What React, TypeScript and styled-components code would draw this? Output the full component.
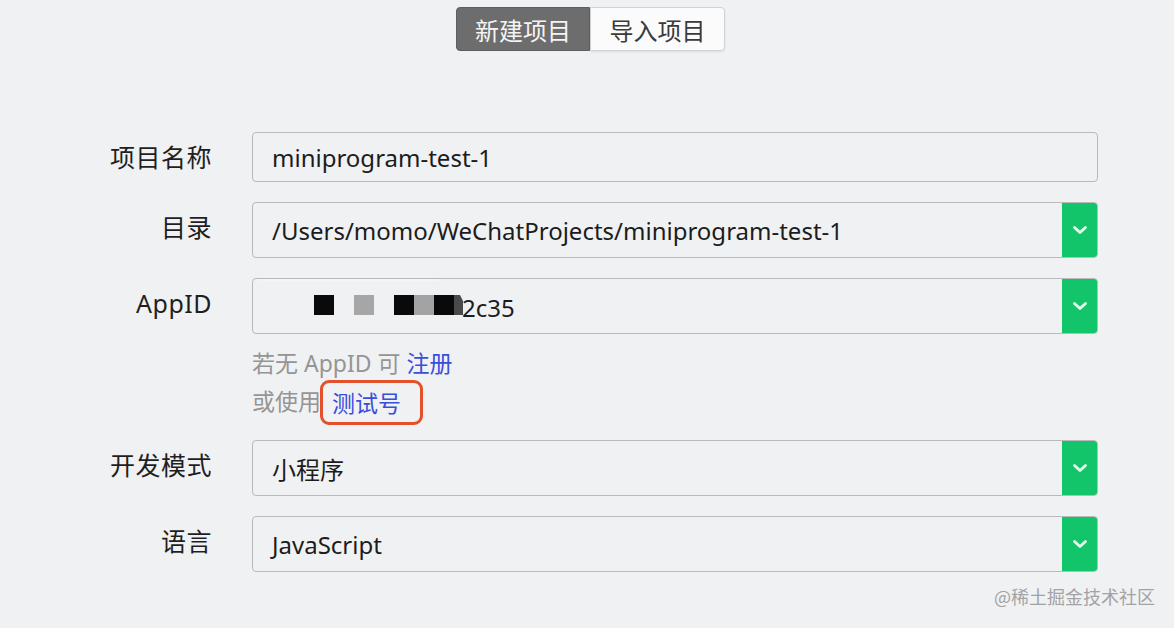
import React from "react";
import styled, { createGlobalStyle } from "styled-components";

const Global = createGlobalStyle`
  html, body { margin: 0; padding: 0; background: #f0f1f3; }
  body { font-family: "Noto Sans", "Noto Sans CJK SC", sans-serif; }
  #root { width: 1174px; height: 628px; overflow: hidden; }
`;

const Page = styled.div`
  position: relative;
  width: 1174px;
  height: 628px;
  display: flex;
  flex-direction: column;
  font-family: "Noto Sans", "Noto Sans CJK SC", sans-serif;
`;

const TabBar = styled.div`
  display: flex;
  padding: 7px 0 0 456px;
`;

const Tab = styled.div<{ $active?: boolean }>`
  width: ${(p) => (p.$active ? 134 : 135)}px;
  height: 44px;
  box-sizing: border-box;
  display: flex;
  align-items: center;
  justify-content: center;
  font-size: 24px;
  font-family: "Noto Sans CJK SC", sans-serif;
  color: ${(p) => (p.$active ? "#f4f4f4" : "#3a3a3a")};
  background: ${(p) => (p.$active ? "#6d6d6d" : "#fbfbfb")};
  border: 1px solid ${(p) => (p.$active ? "#5e5e5e" : "#d2d2d2")};
  border-radius: ${(p) => (p.$active ? "4px 0 0 4px" : "0 4px 4px 0")};
  box-shadow: ${(p) => (p.$active ? "none" : "0 1px 2px rgba(0,0,0,0.08)")};
`;

const Form = styled.div`
  display: flex;
  flex-direction: column;
  margin-top: 81px;
`;

const Row = styled.div<{ $gap?: number }>`
  display: grid;
  grid-template-columns: 212px 846px;
  column-gap: 40px;
  margin-top: ${(p) => p.$gap ?? 0}px;
`;

const Label = styled.div`
  text-align: right;
  height: 50px;
  line-height: 50px;
  font-size: 25px;
  letter-spacing: 0.5px;
  color: #1f1f1f;
  font-family: "Noto Sans", "Noto Sans CJK SC", sans-serif;
`;

const Field = styled.div<{ $h: number }>`
  position: relative;
  height: ${(p) => p.$h}px;
  box-sizing: border-box;
  border: 1px solid #b9b9b9;
  border-radius: 4px;
  display: flex;
  align-items: center;
  padding-left: 19px;
  font-size: 24px;
  color: #1c1c1c;
  font-family: "Noto Sans", "Noto Sans CJK SC", sans-serif;
  overflow: hidden;
`;

const FieldText = styled.span`
  flex: 1;
  white-space: nowrap;
`;

const DropButton = styled.div`
  width: 36px;
  align-self: stretch;
  margin: -1px -1px -1px 0;
  background: #12c46a;
  border-radius: 0 4px 4px 0;
  display: flex;
  align-items: center;
  justify-content: center;
`;

const Chevron = () => (
  <svg width="16" height="10" viewBox="0 0 16 10">
    <path d="M2.5 2.5 L8 7.5 L13.5 2.5" fill="none" stroke="#dff7ea" strokeWidth="3" strokeLinecap="round" strokeLinejoin="round" />
  </svg>
);

const Redaction = styled.span`
  position: absolute;
  left: 6px;
  top: -2px;
  width: 180px;
  height: 4px;
  background: #f4f5f6;
`;

const Mosaic = styled.svg`
  margin-left: 42px;
  flex: none;
`;

const AppIdText = styled.span`
  flex: 1;
  white-space: nowrap;
  margin-top: 2px;
  margin-left: -2px;
`;

const Hints = styled.div`
  display: grid;
  grid-template-columns: 212px 846px;
  column-gap: 40px;
  margin-top: 10px;
`;

const HintLines = styled.div`
  display: flex;
  flex-direction: column;
  font-size: 23px;
  color: #959595;
  font-family: "Noto Sans", "Noto Sans CJK SC", sans-serif;
`;

const HintLine = styled.div`
  height: 38px;
  line-height: 38px;
  display: flex;
  align-items: center;
  white-space: pre;
`;

const Link = styled.span`
  color: #3a4edc;
`;

const Highlight = styled.span`
  display: inline-flex;
  align-items: center;
  height: 45px;
  box-sizing: border-box;
  border: 3px solid #e4502b;
  border-radius: 9px;
  padding: 0 19px 0 9px;
  margin-left: -1px;
  margin-top: 3px;
  color: #3a4edc;
`;

const Watermark = styled.div`
  position: absolute;
  right: 19px;
  bottom: 19px;
  font-size: 18px;
  color: #a3a3a3;
  font-family: "Noto Sans CJK SC", sans-serif;
`;

const Select = ({ h, children }: { h: number; children: React.ReactNode }) => (
  <Field $h={h}>
    <FieldText>{children}</FieldText>
    <DropButton>
      <Chevron />
    </DropButton>
  </Field>
);

export default function App() {
  return (
    <Page>
      <Global />
      <TabBar>
        <Tab $active>新建项目</Tab>
        <Tab>导入项目</Tab>
      </TabBar>
      <Form>
        <Row>
          <Label>项目名称</Label>
          <Field $h={50}>
            <FieldText>miniprogram-test-1</FieldText>
          </Field>
        </Row>
        <Row $gap={20}>
          <Label>目录</Label>
          <Select h={56}>/Users/momo/WeChatProjects/miniprogram-test-1</Select>
        </Row>
        <Row $gap={20}>
          <Label>AppID</Label>
          <Field $h={56}>
            <Redaction />
            <Mosaic width="150" height="22" viewBox="0 0 150 22">
              <rect x="0" y="0" width="20" height="20" fill="#0a0a0a" />
              <rect x="40" y="0" width="20" height="20" fill="#a6a6a6" />
              <rect x="80" y="0" width="20" height="20" fill="#0a0a0a" />
              <rect x="100" y="0" width="20" height="20" fill="#a3a3a3" />
              <rect x="120" y="0" width="20" height="20" fill="#0a0a0a" />
              <path d="M140 0 L146 0 L149 6 L149 20 L140 20 Z" fill="#4a4a4a" />
            </Mosaic>
            <AppIdText>2c35</AppIdText>
            <DropButton>
              <Chevron />
            </DropButton>
          </Field>
        </Row>
        <Hints>
          <div />
          <HintLines>
            <HintLine>
              若无 AppID 可 <Link>注册</Link>
            </HintLine>
            <HintLine>
              或使用<Highlight>测试号</Highlight>
            </HintLine>
          </HintLines>
        </Hints>
        <Row $gap={20}>
          <Label>开发模式</Label>
          <Select h={56}>小程序</Select>
        </Row>
        <Row $gap={20}>
          <Label>语言</Label>
          <Select h={56}>JavaScript</Select>
        </Row>
      </Form>
      <Watermark>@稀土掘金技术社区</Watermark>
    </Page>
  );
}
